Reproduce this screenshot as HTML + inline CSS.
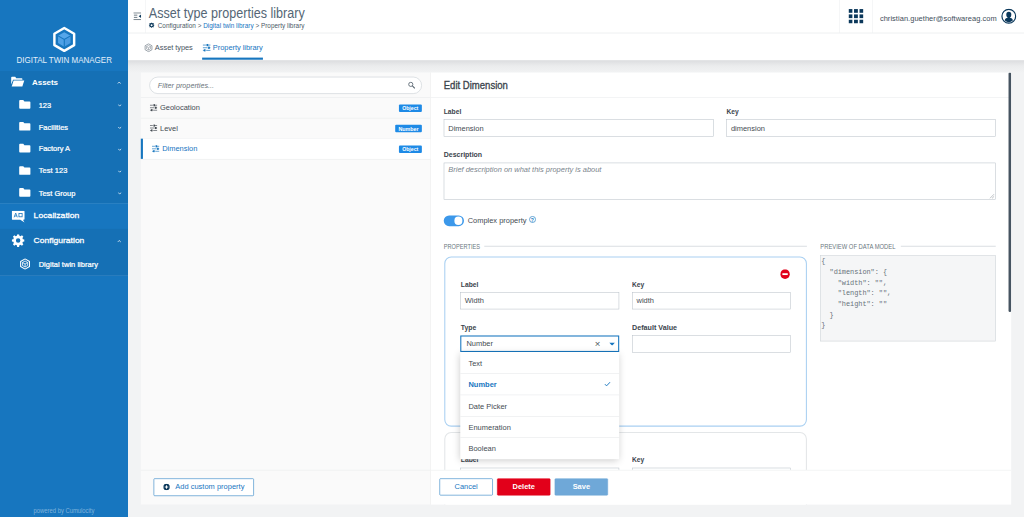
<!DOCTYPE html>
<html lang="en"><head><meta charset="utf-8"><title>Asset type properties library</title>
<style>
html,body{margin:0;padding:0;}
body{width:1024px;height:517px;overflow:hidden;background:#f2f3f4;font-family:"Liberation Sans",sans-serif;}
#app{position:absolute;left:0;top:0;width:1920px;height:970px;transform:scale(0.533333);transform-origin:0 0;background:#f2f3f4;color:#444b52;overflow:hidden;}
.b,.t{position:absolute;box-sizing:border-box;}
.t{line-height:1;white-space:pre;margin:0;}
.m{font-family:"Liberation Mono",monospace;}
.inp{background:#fff;border:1px solid #b9c1c9;}
nav,header,section,main,aside,footer{position:absolute;box-sizing:border-box;}
</style></head><body><div id="app">
<nav style="left:0;top:0;width:240px;height:970px;background:#1776bf;color:#fff;">
<svg class="b" style="left:97px;top:49.4px;overflow:visible" width="47" height="50" viewBox="0 0 47 50"><polygon points="23.50,3.60 42.03,14.30 42.03,35.70 23.50,46.40 4.97,35.70 4.97,14.30" fill="none" stroke="#fff" stroke-width="4.6" stroke-linejoin="round"/><polygon points="23.50,11.50 35.19,18.25 23.50,25.00 11.81,18.25" fill="#55a6ea"/><polygon points="35.19,18.25 35.19,31.75 23.50,38.50 23.50,25.00" fill="#4a9be2"/><polygon points="11.81,18.25 23.50,25.00 23.50,38.50 11.81,31.75" fill="#4fa1e6"/><path d="M11.81 18.25L23.5 25L35.19 18.25M23.5 25L23.50 38.50" stroke="#1776bf" stroke-width="2" fill="none"/></svg>
<div class="t" style="left:30.5px;top:104.6px;font-size:15.4px;color:#e4effa;transform:scaleX(0.9745);transform-origin:0 0;">DIGITAL TWIN MANAGER</div>
<div class="b" style="left:0px;top:133px;width:240px;height:248px;background:rgba(0,0,0,.05)"></div>
<div class="b" style="left:0px;top:428.5px;width:240px;height:88px;background:rgba(0,0,0,.05)"></div>
<svg class="b" style="left:19.5px;top:142px;" width="27" height="21" viewBox="0 0 27 21"><path d="M1 3.5a1.5 1.5 0 0 1 1.5-1.5h6l2 2.5h10a1.5 1.5 0 0 1 1.5 1.5v1.5h-17.5l-3.5 9z" fill="#fff"/><path d="M5.5 8.8h20l-3.6 11.2h-20z" fill="#fff"/></svg>
<div class="t" style="left:60.0px;top:147.3px;font-size:15px;color:#fff;font-weight:700;letter-spacing:-0.07px;">Assets</div>
<svg class="b" style="left:220px;top:153px;" width="7" height="5.2" viewBox="-0.5 0 8 6"><path d="M0 4.5L3.5 1L7 4.5" stroke="#fff" stroke-width="1.6" fill="none"/></svg>
<svg class="b" style="left:35.8px;top:186.9px;overflow:visible" width="21" height="17.5" viewBox="0 0.4 21 16.2"><path d="M0 2a1.6 1.6 0 0 1 1.6-1.6h6l2.2 2.6h9.6a1.6 1.6 0 0 1 1.6 1.6v10.4a1.6 1.6 0 0 1-1.6 1.6h-17.8a1.6 1.6 0 0 1-1.6-1.6z" fill="#fff"/></svg>
<div class="t" style="left:72.5px;top:189.6px;font-size:14px;color:#fff;-webkit-text-stroke:0.45px currentColor;letter-spacing:-0.05px;">123</div>
<svg class="b" style="left:221px;top:195.3px;" width="7" height="5.2" viewBox="-0.5 0 8 6"><path d="M0 1L3.5 4.5L7 1" stroke="#fff" stroke-width="1.6" fill="none"/></svg>
<svg class="b" style="left:35.8px;top:228.1px;overflow:visible" width="21" height="17.5" viewBox="0 0.4 21 16.2"><path d="M0 2a1.6 1.6 0 0 1 1.6-1.6h6l2.2 2.6h9.6a1.6 1.6 0 0 1 1.6 1.6v10.4a1.6 1.6 0 0 1-1.6 1.6h-17.8a1.6 1.6 0 0 1-1.6-1.6z" fill="#fff"/></svg>
<div class="t" style="left:72.5px;top:230.8px;font-size:14px;color:#fff;-webkit-text-stroke:0.45px currentColor;letter-spacing:0.08px;">Facilities</div>
<svg class="b" style="left:221px;top:236.5px;" width="7" height="5.2" viewBox="-0.5 0 8 6"><path d="M0 1L3.5 4.5L7 1" stroke="#fff" stroke-width="1.6" fill="none"/></svg>
<svg class="b" style="left:35.8px;top:269.40000000000003px;overflow:visible" width="21" height="17.5" viewBox="0 0.4 21 16.2"><path d="M0 2a1.6 1.6 0 0 1 1.6-1.6h6l2.2 2.6h9.6a1.6 1.6 0 0 1 1.6 1.6v10.4a1.6 1.6 0 0 1-1.6 1.6h-17.8a1.6 1.6 0 0 1-1.6-1.6z" fill="#fff"/></svg>
<div class="t" style="left:72.5px;top:272.1px;font-size:14px;color:#fff;-webkit-text-stroke:0.45px currentColor;letter-spacing:-0.06px;">Factory A</div>
<svg class="b" style="left:221px;top:277.8px;" width="7" height="5.2" viewBox="-0.5 0 8 6"><path d="M0 1L3.5 4.5L7 1" stroke="#fff" stroke-width="1.6" fill="none"/></svg>
<svg class="b" style="left:35.8px;top:310.6px;overflow:visible" width="21" height="17.5" viewBox="0 0.4 21 16.2"><path d="M0 2a1.6 1.6 0 0 1 1.6-1.6h6l2.2 2.6h9.6a1.6 1.6 0 0 1 1.6 1.6v10.4a1.6 1.6 0 0 1-1.6 1.6h-17.8a1.6 1.6 0 0 1-1.6-1.6z" fill="#fff"/></svg>
<div class="t" style="left:72.5px;top:313.3px;font-size:14px;color:#fff;-webkit-text-stroke:0.45px currentColor;letter-spacing:0.16px;">Test 123</div>
<svg class="b" style="left:221px;top:319px;" width="7" height="5.2" viewBox="-0.5 0 8 6"><path d="M0 1L3.5 4.5L7 1" stroke="#fff" stroke-width="1.6" fill="none"/></svg>
<svg class="b" style="left:35.8px;top:351.90000000000003px;overflow:visible" width="21" height="17.5" viewBox="0 0.4 21 16.2"><path d="M0 2a1.6 1.6 0 0 1 1.6-1.6h6l2.2 2.6h9.6a1.6 1.6 0 0 1 1.6 1.6v10.4a1.6 1.6 0 0 1-1.6 1.6h-17.8a1.6 1.6 0 0 1-1.6-1.6z" fill="#fff"/></svg>
<div class="t" style="left:72.5px;top:354.6px;font-size:14px;color:#fff;-webkit-text-stroke:0.45px currentColor;letter-spacing:0.03px;">Test Group</div>
<svg class="b" style="left:221px;top:360.3px;" width="7" height="5.2" viewBox="-0.5 0 8 6"><path d="M0 1L3.5 4.5L7 1" stroke="#fff" stroke-width="1.6" fill="none"/></svg>
<div class="b" style="left:0px;top:381px;width:240px;height:1px;background:rgba(255,255,255,.16)"></div>
<svg class="b" style="left:22px;top:394.5px;" width="26" height="23" viewBox="0 0 26 23"><path d="M1.5 0h21a1.5 1.5 0 0 1 1.5 1.5v14a1.5 1.5 0 0 1-1.5 1.5h-1.5l3 5l-8-5h-14.5a1.5 1.5 0 0 1-1.5-1.5v-14a1.5 1.5 0 0 1 1.5-1.5z" fill="#fff"/><path d="M4.5 12.5L7.5 4.5L10.5 12.5M5.6 10h3.8" stroke="#1776bf" stroke-width="1.5" fill="none"/><rect x="13.5" y="5.5" width="6" height="6" fill="none" stroke="#1776bf" stroke-width="1.5"/></svg>
<div class="t" style="left:62.7px;top:395.8px;font-size:15px;color:#fff;-webkit-text-stroke:0.5px currentColor;transform:scaleX(1.0830);transform-origin:0 0;">Localization</div>
<svg class="b" style="left:22px;top:439px;" width="24" height="24" viewBox="0 0 24 24"><path fill="#fff" fill-rule="evenodd" d="M10.2 0h3.6l.6 3.1a9 9 0 0 1 2.2.9l2.6-1.8 2.6 2.6-1.8 2.6a9 9 0 0 1 .9 2.2l3.1.6v3.6l-3.1.6a9 9 0 0 1-.9 2.2l1.8 2.6-2.6 2.6-2.6-1.8a9 9 0 0 1-2.2.9l-.6 3.1h-3.6l-.6-3.1a9 9 0 0 1-2.2-.9l-2.6 1.8-2.6-2.6 1.8-2.6a9 9 0 0 1-.9-2.2l-3.1-.6v-3.6l3.1-.6a9 9 0 0 1 .9-2.2l-1.8-2.6 2.6-2.6 2.6 1.8a9 9 0 0 1 2.2-.9zM12 7.8a4.2 4.2 0 1 0 0 8.4a4.2 4.2 0 0 0 0-8.4z"/></svg>
<div class="t" style="left:62.7px;top:442.9px;font-size:15px;color:#fff;-webkit-text-stroke:0.5px currentColor;transform:scaleX(1.0669);transform-origin:0 0;">Configuration</div>
<svg class="b" style="left:220px;top:449.5px;" width="7" height="5.2" viewBox="-0.5 0 8 6"><path d="M0 4.5L3.5 1L7 4.5" stroke="#fff" stroke-width="1.6" fill="none"/></svg>
<svg class="b" style="left:36px;top:484px;" width="22" height="22" viewBox="0 0 22 22"><polygon points="11.00,1.40 19.31,6.20 19.31,15.80 11.00,20.60 2.69,15.80 2.69,6.20" fill="none" stroke="#fff" stroke-width="2.0" stroke-linejoin="round"/><polygon points="11.00,5.40 15.85,8.20 15.85,13.80 11.00,16.60 6.15,13.80 6.15,8.20" fill="none" stroke="#fff" stroke-width="1.5" stroke-linejoin="round"/><path d="M6.15 8.20L11 11L15.85 8.20M11 11L11.00 16.60" stroke="#fff" stroke-width="1.5" fill="none"/></svg>
<div class="t" style="left:72.5px;top:488.1px;font-size:14px;color:#fff;-webkit-text-stroke:0.45px currentColor;letter-spacing:0.08px;">Digital twin library</div>
<div class="b" style="left:0px;top:515.5px;width:240px;height:1px;background:rgba(255,255,255,.16)"></div>
<div class="t" style="left:62.7px;top:951.2px;font-size:12px;color:rgba(255,255,255,.45);transform:scaleX(0.9140);transform-origin:0 0;">powered by Cumulocity</div>
</nav>
<header style="left:240px;top:0;width:1680px;height:62px;background:#fff;border-bottom:1px solid #edeff1;">
<svg class="b" style="left:10px;top:22.6px;" width="15" height="15" viewBox="0 0 15 15"><path d="M0 1.2h14.5M1 5.400h6.500M1 9.600h6.500M0 13.800h14.5" stroke="#4b5a67" stroke-width="1.5"/><path d="M14.5 4.200v6.600l-4.500-3.300z" fill="#0b385b"/></svg>
<div class="b" style="left:32px;top:0px;width:1px;height:62px;background:#eceef0"></div>
<div class="t" style="left:39.0px;top:10.9px;font-size:26.3px;color:#556776;transform:scaleX(0.8973);transform-origin:0 0;">Asset type properties library</div>
<svg class="b" style="left:39.39999999999998px;top:41.8px;" width="10.5" height="10.5" viewBox="0 0 24 24"><path fill="#0b385b" fill-rule="evenodd" d="M10.2 0h3.6l.6 3.1a9 9 0 0 1 2.2.9l2.6-1.8 2.6 2.6-1.8 2.6a9 9 0 0 1 .9 2.2l3.1.6v3.6l-3.1.6a9 9 0 0 1-.9 2.2l1.8 2.6-2.6 2.6-2.6-1.8a9 9 0 0 1-2.2.9l-.6 3.1h-3.6l-.6-3.1a9 9 0 0 1-2.2-.9l-2.6 1.8-2.6-2.6 1.8-2.6a9 9 0 0 1-.9-2.2l-3.1-.6v-3.6l3.1-.6a9 9 0 0 1 .9-2.2l-1.8-2.6 2.6-2.6 2.6 1.8a9 9 0 0 1 2.2-.9zM12 7.8a4.2 4.2 0 1 0 0 8.4a4.2 4.2 0 0 0 0-8.4z"/></svg>
<div class="t" style="left:55.69999999999999px;top:43.1px;font-size:12px;color:#4b5a67;letter-spacing:0.02px;">Configuration &gt; <span style="color:#1776bf">Digital twin library</span> &gt; Property library</div>
<div class="b" style="left:1334px;top:0px;width:1px;height:62px;background:#eceef0"></div>
<div class="b" style="left:1395px;top:0px;width:1px;height:62px;background:#eceef0"></div>
<svg class="b" style="left:1351px;top:17px;" width="28" height="27" viewBox="0 0 28 27"><rect x="0.0" y="0.0" width="7.2" height="7" fill="#0b385b"/><rect x="0.0" y="10.0" width="7.2" height="7" fill="#0b385b"/><rect x="0.0" y="20.0" width="7.2" height="7" fill="#0b385b"/><rect x="10.3" y="0.0" width="7.2" height="7" fill="#0b385b"/><rect x="10.3" y="10.0" width="7.2" height="7" fill="#0b385b"/><rect x="10.3" y="20.0" width="7.2" height="7" fill="#0b385b"/><rect x="20.6" y="0.0" width="7.2" height="7" fill="#0b385b"/><rect x="20.6" y="10.0" width="7.2" height="7" fill="#0b385b"/><rect x="20.6" y="20.0" width="7.2" height="7" fill="#0b385b"/></svg>
<div class="t" style="left:1409.8px;top:27.7px;font-size:14px;color:#3e4d5a;letter-spacing:0.08px;">christian.guether@softwareag.com</div>
<svg class="b" style="left:1637px;top:16px;" width="29" height="29" viewBox="0 0 29 29"><circle cx="14.5" cy="14.5" r="12.9" fill="#fff" stroke="#0b385b" stroke-width="2.3"/><ellipse cx="14.5" cy="11.6" rx="4.7" ry="5.4" fill="#0b385b"/><path d="M12.5 15h4v2.500c3 .6 5.200 1.500 5.600 4.800a11.600 11.600 0 0 1-15.200 0c.4-3.300 2.600-4.200 5.600-4.800z" fill="#0b385b"/></svg>
</header>
<section style="left:240px;top:63px;width:1680px;height:49.500px;background:#fff;">
<svg class="b" style="left:30px;top:17.799999999999997px;" width="17" height="17" viewBox="0 0 22 22"><polygon points="11.00,1.40 19.31,6.20 19.31,15.80 11.00,20.60 2.69,15.80 2.69,6.20" fill="none" stroke="#6a7680" stroke-width="1.6" stroke-linejoin="round"/><polygon points="11.00,5.40 15.85,8.20 15.85,13.80 11.00,16.60 6.15,13.80 6.15,8.20" fill="none" stroke="#6a7680" stroke-width="1.1" stroke-linejoin="round"/><path d="M6.15 8.20L11 11L15.85 8.20M11 11L11.00 16.60" stroke="#6a7680" stroke-width="1.1" fill="none"/></svg>
<div class="t" style="left:50.4px;top:19.4px;font-size:14px;color:#49555f;letter-spacing:-0.12px;">Asset types</div>
<svg class="b" style="left:140px;top:19px;" width="15" height="15" viewBox="0 0 15 15"><path d="M0 2.500h15M0 7.500h15M0 12.500h15" stroke="#1776bf" stroke-width="1.300"/><rect x="7.200" y="0.400" width="3.200" height="4.200" fill="#1776bf"/><rect x="10.200" y="5.400" width="3.200" height="4.200" fill="#1776bf"/><rect x="2.200" y="10.400" width="3.200" height="4.200" fill="#1776bf"/><path d="M5.800 2.500h1.400M8.800 7.500h1.400M5.400 12.500h1.400" stroke="#fff" stroke-width="1.500"/></svg>
<div class="t" style="left:159.0px;top:19.4px;font-size:14px;color:#1776bf;letter-spacing:-0.08px;">Property library</div>
<div class="b" style="left:138.5px;top:44.5px;width:114.5px;height:4.5px;background:#1776bf"></div>
</section>
<div class="b" style="left:240px;top:112.5px;width:1680px;height:24px;background:linear-gradient(#dcdddf,#ebeced 45%,#f2f3f4)"></div>
<aside style="left:264px;top:136px;width:544px;height:809.500px;background:#fafafa;border-right:1px solid #ededed;">
<div class="b" style="left:16px;top:8px;width:511px;height:32px;background:#fff;border:1px solid #c3cad0;border-radius:16px;"></div>
<div class="t" style="left:31.7px;top:16.6px;font-size:14px;color:#69737b;font-style:italic;transform:scaleX(0.9676);transform-origin:0 0;">Filter properties...</div>
<svg class="b" style="left:501px;top:16.5px;" width="14" height="14" viewBox="0 0 14 14"><circle cx="5.2" cy="5.2" r="3.9" fill="none" stroke="#56636f" stroke-width="1.6"/><path d="M8.200 8.200L12.800 12.800" stroke="#56636f" stroke-width="2"/></svg>
<div class="b" style="left:0px;top:46px;width:543px;height:1px;background:#e6e8ea"></div>
<svg class="b" style="left:16.5px;top:59px;" width="14" height="14" viewBox="0 0 15 15"><path d="M0 2.500h15M0 7.500h15M0 12.500h15" stroke="#444b52" stroke-width="1.300"/><rect x="7.200" y="0.400" width="3.200" height="4.200" fill="#444b52"/><rect x="10.200" y="5.400" width="3.200" height="4.200" fill="#444b52"/><rect x="2.200" y="10.400" width="3.200" height="4.200" fill="#444b52"/><path d="M5.800 2.500h1.400M8.800 7.500h1.400M5.400 12.500h1.400" stroke="#fff" stroke-width="1.500"/></svg>
<div class="t" style="left:36.0px;top:59.3px;font-size:14px;color:#444b52;">Geolocation</div>
<div class="b" style="left:484px;top:60px;width:43px;height:13.5px;background:#1e8ae6;border-radius:2px;"></div>
<div class="t" style="left:490.2px;top:61.5px;font-size:10.8px;color:#fff;font-weight:700;transform:scaleX(0.8986);transform-origin:0 0;">Object</div>
<div class="b" style="left:0px;top:85px;width:543px;height:1px;background:#e9ebec"></div>
<svg class="b" style="left:16.5px;top:97px;" width="14" height="14" viewBox="0 0 15 15"><path d="M0 2.500h15M0 7.500h15M0 12.500h15" stroke="#444b52" stroke-width="1.300"/><rect x="7.200" y="0.400" width="3.200" height="4.200" fill="#444b52"/><rect x="10.200" y="5.400" width="3.200" height="4.200" fill="#444b52"/><rect x="2.200" y="10.400" width="3.200" height="4.200" fill="#444b52"/><path d="M5.800 2.500h1.400M8.800 7.500h1.400M5.400 12.500h1.400" stroke="#fff" stroke-width="1.500"/></svg>
<div class="t" style="left:36.0px;top:97.3px;font-size:14px;color:#444b52;">Level</div>
<div class="b" style="left:476.5px;top:98px;width:50.5px;height:13.5px;background:#1e8ae6;border-radius:2px;"></div>
<div class="t" style="left:482.7px;top:99.5px;font-size:10.8px;color:#fff;font-weight:700;transform:scaleX(0.9239);transform-origin:0 0;">Number</div>
<div class="b" style="left:0px;top:123px;width:543px;height:1px;background:#e9ebec"></div>
<div class="b" style="left:0px;top:124px;width:543px;height:38px;background:#fff;border-left:4px solid #1776bf;"></div>
<svg class="b" style="left:20.5px;top:136px;" width="14" height="14" viewBox="0 0 15 15"><path d="M0 2.500h15M0 7.500h15M0 12.500h15" stroke="#1776bf" stroke-width="1.300"/><rect x="7.200" y="0.400" width="3.200" height="4.200" fill="#1776bf"/><rect x="10.200" y="5.400" width="3.200" height="4.200" fill="#1776bf"/><rect x="2.200" y="10.400" width="3.200" height="4.200" fill="#1776bf"/><path d="M5.800 2.500h1.400M8.800 7.500h1.400M5.400 12.500h1.400" stroke="#fff" stroke-width="1.500"/></svg>
<div class="t" style="left:40.0px;top:136.3px;font-size:14px;color:#1776bf;">Dimension</div>
<div class="b" style="left:484px;top:137px;width:43px;height:13.5px;background:#1e8ae6;border-radius:2px;"></div>
<div class="t" style="left:490.2px;top:138.5px;font-size:10.8px;color:#fff;font-weight:700;transform:scaleX(0.8986);transform-origin:0 0;">Object</div>
<div class="b" style="left:0px;top:162px;width:543px;height:1px;background:#e9ebec"></div>
<div class="b" style="left:0px;top:745px;width:543px;height:1px;background:#e9ebec"></div>
<div class="b" style="left:24px;top:761px;width:188px;height:32.5px;background:#fff;border:1px solid #1776bf;border-radius:2px;"></div>
<svg class="b" style="left:42.39999999999998px;top:770.6px;" width="12.4" height="12.4" viewBox="-0.2 -0.2 12.4 12.4"><circle cx="6" cy="6" r="6" fill="#0b385b"/><path d="M6 2.800v6.400M2.800 6h6.400" stroke="#fff" stroke-width="1.8"/></svg>
<div class="t" style="left:64.6px;top:769.4px;font-size:14px;color:#1776bf;letter-spacing:0.03px;">Add custom property</div>
</aside>
<main style="left:808px;top:136px;width:1088px;height:809.500px;background:#fff;overflow:hidden;">
<div class="t" style="left:24.0px;top:13.7px;font-size:19.4px;color:#3b444c;-webkit-text-stroke:0.6px currentColor;transform:scaleX(0.9228);transform-origin:0 0;">Edit Dimension</div>
<div class="b" style="left:0px;top:46px;width:1088px;height:1px;background:#e9ebec"></div>
<div class="t" style="left:24.0px;top:66.1px;font-size:14px;color:#3b444c;font-weight:700;transform:scaleX(0.9025);transform-origin:0 0;">Label</div>
<div class="b inp" style="left:24px;top:88px;width:506px;height:32px;"></div>
<div class="t" style="left:32.5px;top:96.7px;font-size:14px;color:#444b52;">Dimension</div>
<div class="t" style="left:554.0px;top:66.1px;font-size:14px;color:#3b444c;font-weight:700;transform:scaleX(0.8955);transform-origin:0 0;">Key</div>
<div class="b inp" style="left:554px;top:88px;width:504.5px;height:32px;"></div>
<div class="t" style="left:562.5px;top:96.7px;font-size:14px;color:#444b52;">dimension</div>
<div class="t" style="left:24.0px;top:146.9px;font-size:14px;color:#3b444c;font-weight:700;transform:scaleX(0.9349);transform-origin:0 0;">Description</div>
<div class="b inp" style="left:24px;top:168.5px;width:1034.5px;height:70px;"></div>
<div class="t" style="left:32.5px;top:174.6px;font-size:14px;color:#7a848c;font-style:italic;">Brief description on what this property is about</div>
<svg class="b" style="left:1047px;top:227px;" width="10" height="10" viewBox="0 0 10 10"><path d="M9 1L1 9M9 5L5 9" stroke="#8a9299" stroke-width="1"/></svg>
<div class="b" style="left:24px;top:268.2px;width:38px;height:19.5px;background:#3c98ea;border-radius:10px;"></div>
<div class="b" style="left:43.799999999999955px;top:270.2px;width:15.5px;height:15.5px;background:#fff;border-radius:50%;"></div>
<div class="t" style="left:69.0px;top:271.1px;font-size:14px;color:#444b52;letter-spacing:-0.03px;">Complex property</div>
<svg class="b" style="left:184px;top:269.3px;" width="13" height="13" viewBox="0 0 13 13"><circle cx="6.500" cy="6.500" r="5.700" fill="none" stroke="#1776bf" stroke-width="1.2"/></svg>
<div class="t" style="left:187.3px;top:271.8px;font-size:9.5px;color:#1776bf;font-weight:700;">?</div>
<div class="t" style="left:24.0px;top:320.2px;font-size:12px;color:#6b7780;transform:scaleX(0.8816);transform-origin:0 0;">PROPERTIES</div>
<div class="b" style="left:100px;top:325px;width:604.5px;height:1px;background:#b8c1c9"></div>
<div class="t" style="left:730.2px;top:320.2px;font-size:12px;color:#6b7780;transform:scaleX(0.9141);transform-origin:0 0;">PREVIEW OF DATA MODEL</div>
<div class="b" style="left:880.5999999999999px;top:325px;width:178px;height:1px;background:#b8c1c9"></div>
<div class="b" style="left:730px;top:342.7px;width:328.5px;height:161.6px;background:#f5f6f7;border:1px solid #cbd1d6;"></div>
<div class="t m" style="left:732.0px;top:347.8px;font-size:13px;color:#687279;letter-spacing:-0.100px;">{</div>
<div class="t m" style="left:732.0px;top:367.8px;font-size:13px;color:#687279;letter-spacing:-0.100px;">  "dimension": {</div>
<div class="t m" style="left:732.0px;top:387.8px;font-size:13px;color:#687279;letter-spacing:-0.100px;">    "width": "",</div>
<div class="t m" style="left:732.0px;top:407.8px;font-size:13px;color:#687279;letter-spacing:-0.100px;">    "length": "",</div>
<div class="t m" style="left:732.0px;top:427.8px;font-size:13px;color:#687279;letter-spacing:-0.100px;">    "height": ""</div>
<div class="t m" style="left:732.0px;top:447.8px;font-size:13px;color:#687279;letter-spacing:-0.100px;">  }</div>
<div class="t m" style="left:732.0px;top:467.8px;font-size:13px;color:#687279;letter-spacing:-0.100px;">}</div>
<div class="b" style="left:24.5px;top:345px;width:680.5px;height:318.5px;background:#fff;border:2px solid #a9d0f2;border-radius:13px;"></div>
<svg class="b" style="left:655px;top:369.3px;" width="18" height="18" viewBox="0 0 18 18"><circle cx="9" cy="9" r="9" fill="#e2001a"/><rect x="4" y="7.300" width="10" height="3.400" fill="#fff"/></svg>
<div class="t" style="left:55.6px;top:390.1px;font-size:14px;color:#3b444c;font-weight:700;transform:scaleX(0.9025);transform-origin:0 0;">Label</div>
<div class="b inp" style="left:55px;top:412px;width:297.5px;height:32px;"></div>
<div class="t" style="left:63.5px;top:420.7px;font-size:14px;color:#444b52;">Width</div>
<div class="t" style="left:377.0px;top:390.1px;font-size:14px;color:#3b444c;font-weight:700;transform:scaleX(0.8955);transform-origin:0 0;">Key</div>
<div class="b inp" style="left:377px;top:412px;width:298px;height:32px;"></div>
<div class="t" style="left:385.5px;top:420.7px;font-size:14px;color:#444b52;">width</div>
<div class="t" style="left:55.6px;top:470.9px;font-size:14px;color:#3b444c;font-weight:700;transform:scaleX(0.9166);transform-origin:0 0;">Type</div>
<div class="t" style="left:377.0px;top:470.4px;font-size:14px;color:#3b444c;font-weight:700;transform:scaleX(0.9611);transform-origin:0 0;">Default Value</div>
<div class="b inp" style="left:377px;top:493px;width:298px;height:32px;"></div>
<div class="b" style="left:24.5px;top:673.5px;width:680.5px;height:200px;background:#fff;border:2px solid #e3e6e8;border-radius:13px;"></div>
<div class="t" style="left:55.6px;top:718.5px;font-size:14px;color:#3b444c;font-weight:700;transform:scaleX(0.9025);transform-origin:0 0;">Label</div>
<div class="t" style="left:377.0px;top:718.5px;font-size:14px;color:#3b444c;font-weight:700;transform:scaleX(0.8955);transform-origin:0 0;">Key</div>
<div class="b inp" style="left:55px;top:741px;width:297.5px;height:32px;"></div>
<div class="b inp" style="left:377px;top:741px;width:298px;height:32px;"></div>
<div class="b" style="left:55px;top:493px;width:297.5px;height:31px;background:#fff;border:2px solid #1776bf;"></div>
<div class="t" style="left:66.5px;top:500.6px;font-size:14px;color:#444b52;">Number</div>
<div class="t" style="left:307.0px;top:499.8px;font-size:18px;color:#4a545c;">×</div>
<svg class="b" style="left:333.5px;top:505.5px;" width="11.5" height="6.5" viewBox="0 0 12 7"><path d="M0 0h12l-6 7z" fill="#1776bf"/></svg>
<div class="b" style="left:55px;top:524px;width:297.500px;height:200.500px;background:#fff;box-shadow:0 4px 14px rgba(0,0,0,.22);">
<div class="t" style="left:15.4px;top:13.8px;font-size:14px;color:#444b52;">Text</div>
<div class="b" style="left:0px;top:39.6px;width:297.5px;height:1px;background:#e4e7e9"></div>
<div class="t" style="left:15.4px;top:53.9px;font-size:14px;color:#1776bf;font-weight:700;">Number</div>
<svg class="b" style="left:269.5px;top:54.6px;" width="12" height="10" viewBox="0 0 12 10"><path d="M1 5.200L4.300 8.500L11 1.500" stroke="#1776bf" stroke-width="1.800" fill="none"/></svg>
<div class="b" style="left:0px;top:79.7px;width:297.5px;height:1px;background:#e4e7e9"></div>
<div class="t" style="left:15.4px;top:94.0px;font-size:14px;color:#444b52;">Date Picker</div>
<div class="b" style="left:0px;top:119.80000000000001px;width:297.5px;height:1px;background:#e4e7e9"></div>
<div class="t" style="left:15.4px;top:134.1px;font-size:14px;color:#444b52;">Enumeration</div>
<div class="b" style="left:0px;top:159.9px;width:297.5px;height:1px;background:#e4e7e9"></div>
<div class="t" style="left:15.4px;top:174.2px;font-size:14px;color:#444b52;">Boolean</div>
</div>
<div class="b" style="left:0px;top:745px;width:1088px;height:64.5px;background:#fff;border-top:1px solid #e9ebec;"></div>
<div class="b" style="left:16px;top:761.4px;width:100px;height:32px;background:#fff;border:1px solid #1776bf;border-radius:2px;"></div>
<div class="t" style="left:44.2px;top:769.3px;font-size:14px;color:#1776bf;">Cancel</div>
<div class="b" style="left:124px;top:761.4px;width:100px;height:32px;background:#e2001a;border:1px solid #e2001a;border-radius:2px;"></div>
<div class="t" style="left:153.0px;top:769.3px;font-size:14px;color:#fff;font-weight:700;">Delete</div>
<div class="b" style="left:232px;top:761.4px;width:100px;height:32px;background:#6fa8d8;border:1px solid #6fa8d8;border-radius:2px;"></div>
<div class="t" style="left:265.7px;top:769.3px;font-size:14px;color:#fff;font-weight:700;">Save</div>
<div class="b" style="left:1082.8px;top:0px;width:5px;height:449px;background:#465461;border-radius:3px;"></div>
</main>
</div></body></html>
